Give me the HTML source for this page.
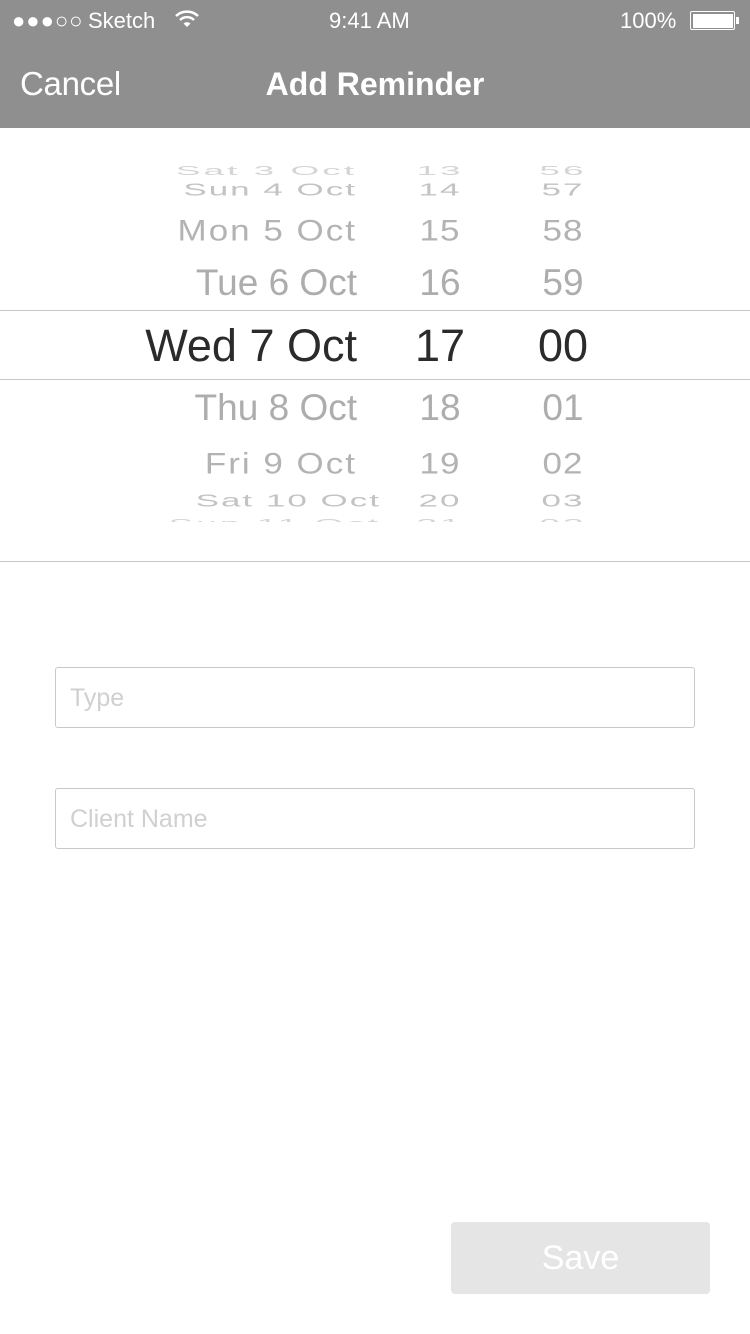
<!DOCTYPE html>
<html><head><meta charset="utf-8"><style>
*{margin:0;padding:0;box-sizing:border-box}
body{width:750px;height:1334px;background:#fff;position:relative;overflow:hidden;font-family:"Liberation Sans",Arial,sans-serif}
.nav{position:absolute;left:0;top:0;width:750px;height:128px;background:#8f8f8f;color:#fff}
.a{position:absolute;white-space:nowrap;line-height:1}
.r{position:absolute;white-space:nowrap;line-height:1;transform-origin:center center}
.d{right:393px;text-align:right}
.h{left:380px;width:120px;text-align:center}
.m{left:503px;width:120px;text-align:center}
.line{position:absolute;left:0;width:750px;height:1px;background:#c8c8c8}
.box{position:absolute;left:55px;width:640px;height:61px;border:1px solid #c8c8c8;border-radius:3px}
.ph{position:absolute;left:14px;top:18px;font-size:25px;color:#d0d0d0;line-height:1}
</style></head><body>
<div class="nav">
  <div class="a" style="left:12px;top:10px;font-size:22px;letter-spacing:1px">●●●○○</div>
  <div class="a" style="left:88px;top:10px;font-size:22px">Sketch</div>
  <svg style="position:absolute;left:174px;top:9px" width="26" height="20" viewBox="0 0 26 20"><path d="M2 7 A16 16 0 0 1 24 7" stroke="#fff" stroke-width="2.5" fill="none"/><path d="M6 11 A10 10 0 0 1 20 11" stroke="#fff" stroke-width="2.5" fill="none"/><path d="M13 18 L9.5 14.5 A5 5 0 0 1 16.5 14.5 Z" fill="#fff"/></svg>
  <div class="a" style="left:329px;top:10px;font-size:22px">9:41 AM</div>
  <div class="a" style="left:620px;top:10px;font-size:22px">100%</div>
  <div style="position:absolute;left:690px;top:11px;width:45px;height:19px;border:1.5px solid #fff;border-radius:2px;padding:1.5px"><div style="width:100%;height:100%;background:#fff"></div></div>
  <div style="position:absolute;left:736px;top:17px;width:3px;height:7px;background:#fff"></div>
  <div class="a" style="left:20px;top:67px;font-size:33px;letter-spacing:-0.3px">Cancel</div>
  <div class="a" style="left:0;width:750px;text-align:center;top:68px;font-size:32px;font-weight:bold">Add Reminder</div>
</div>

<div style="position:absolute;left:0;top:160px;width:750px;height:362px;overflow:hidden">
<div style="position:absolute;left:0;top:-160px;width:750px;height:700px">
<div class="r d" style="top:152px;font-size:37px;color:#d5d5d5;transform:scaleY(0.35);letter-spacing:3px">Sat 3 Oct</div>
<div class="r h" style="top:152px;font-size:37px;color:#d5d5d5;transform:scaleY(0.35);letter-spacing:3px">13</div>
<div class="r m" style="top:152px;font-size:37px;color:#d5d5d5;transform:scaleY(0.35);letter-spacing:3px">56</div>
<div class="r d" style="top:172px;font-size:35px;color:#c3c3c3;transform:scaleY(0.5);letter-spacing:2px">Sun 4 Oct</div>
<div class="r h" style="top:172px;font-size:35px;color:#c3c3c3;transform:scaleY(0.5);letter-spacing:2px">14</div>
<div class="r m" style="top:172px;font-size:35px;color:#c3c3c3;transform:scaleY(0.5);letter-spacing:2px">57</div>
<div class="r d" style="top:213px;font-size:35px;color:#b3b3b3;transform:scaleY(0.85);letter-spacing:2px">Mon 5 Oct</div>
<div class="r h" style="top:213px;font-size:35px;color:#b3b3b3;transform:scaleY(0.85);letter-spacing:1px">15</div>
<div class="r m" style="top:213px;font-size:35px;color:#b3b3b3;transform:scaleY(0.85);letter-spacing:1px">58</div>
<div class="r d" style="top:264px;font-size:37px;color:#adadad">Tue 6 Oct</div>
<div class="r h" style="top:264px;font-size:37px;color:#adadad">16</div>
<div class="r m" style="top:264px;font-size:37px;color:#adadad">59</div>
<div class="r d" style="top:323px;font-size:45px;color:#2b2b2b">Wed 7 Oct</div>
<div class="r h" style="top:323px;font-size:45px;color:#2b2b2b">17</div>
<div class="r m" style="top:323px;font-size:45px;color:#2b2b2b">00</div>
<div class="r d" style="top:389px;font-size:37px;color:#adadad">Thu 8 Oct</div>
<div class="r h" style="top:389px;font-size:37px;color:#adadad">18</div>
<div class="r m" style="top:389px;font-size:37px;color:#adadad">01</div>
<div class="r d" style="top:446px;font-size:35px;color:#b3b3b3;transform:scaleY(0.85);letter-spacing:2px">Fri 9 Oct</div>
<div class="r h" style="top:446px;font-size:35px;color:#b3b3b3;transform:scaleY(0.85);letter-spacing:1px">19</div>
<div class="r m" style="top:446px;font-size:35px;color:#b3b3b3;transform:scaleY(0.85);letter-spacing:1px">02</div>
<div class="r d" style="top:483px;right:369px;font-size:35px;color:#c3c3c3;transform:scaleY(0.5);letter-spacing:2px">Sat 10 Oct</div>
<div class="r h" style="top:483px;font-size:35px;color:#c3c3c3;transform:scaleY(0.5);letter-spacing:2px">20</div>
<div class="r m" style="top:483px;font-size:35px;color:#c3c3c3;transform:scaleY(0.5);letter-spacing:2px">03</div>
<div class="r d" style="top:505px;right:369px;font-size:37px;color:#d5d5d5;transform:scaleY(0.35);letter-spacing:3px">Sun 11 Oct</div>
<div class="r h" style="top:505px;font-size:37px;color:#d5d5d5;transform:scaleY(0.35);letter-spacing:3px">21</div>
<div class="r m" style="top:505px;font-size:37px;color:#d5d5d5;transform:scaleY(0.35);letter-spacing:3px">03</div>
</div></div>

<div class="line" style="top:310px"></div>
<div class="line" style="top:379px"></div>
<div class="line" style="top:561px"></div>

<div class="box" style="top:667px"><div class="ph">Type</div></div>
<div class="box" style="top:788px"><div class="ph">Client Name</div></div>

<div style="position:absolute;left:451px;top:1222px;width:259px;height:72px;background:#e5e5e5;border-radius:4px;color:#fff;font-size:34px;text-align:center;line-height:72px">Save</div>
</body></html>
